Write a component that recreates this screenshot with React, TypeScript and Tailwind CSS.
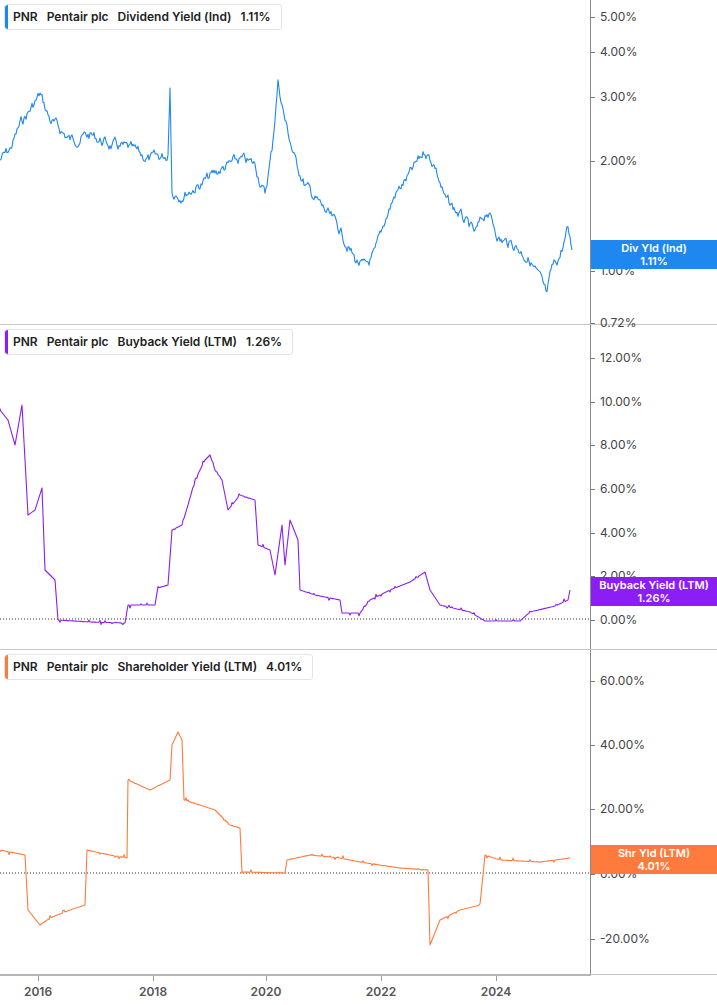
import React from "react";

type P = [number, number];

function rnd(seed: number) {
  let s = seed;
  return () => {
    s = (s * 9301 + 49297) % 233280;
    return s / 233280;
  };
}

function build(pts: P[], off: number, amp: number, seed: number, step = false) {
  const r = rnd(seed);
  const out: string[] = [];
  let drift = 0;
  for (let i = 0; i < pts.length - 1; i++) {
    const [x0, y0] = pts[i];
    const [x1, y1] = pts[i + 1];
    if (x1 - x0 <= 3) {
      out.push(`${x0},${y0 - off}`);
      continue;
    }
    for (let x = x0; x < x1; x += 1) {
      const t = (x - x0) / (x1 - x0);
      drift = drift * 0.7 + (r() - 0.5) * amp;
      const n = step ? (r() > 0.9 ? (r() - 0.5) * amp : 0) : drift;
      const y = y0 + (y1 - y0) * t + n;
      out.push(`${x},${(y - off).toFixed(1)}`);
    }
  }
  const l = pts[pts.length - 1];
  out.push(`${l[0]},${l[1] - off}`);
  return out.join(" ");
}

const s1: P[] = [[0,160],[10,150],[20,125],[30,110],[40,95],[50,120],[70,140],[90,135],[110,145],[130,150],[150,160],[168,155],[170,88],[172,190],[180,195],[200,185],[220,170],[240,160],[255,165],[265,195],[272,150],[278,82],[285,120],[295,160],[305,185],[320,205],[340,230],[355,260],[365,268],[375,255],[385,220],[395,195],[410,175],[425,150],[435,165],[445,200],[460,215],[475,235],[487,210],[500,240],[515,245],[530,260],[540,280],[547,297],[552,270],[560,255],[568,230],[572,250]];
const s2: P[] = [[0,410],[8,420],[15,445],[22,405],[28,515],[35,510],[42,488],[45,570],[55,580],[58,620],[90,622],[125,623],[128,605],[155,605],[158,588],[168,585],[172,530],[182,525],[188,505],[195,480],[205,460],[210,455],[215,470],[222,480],[228,510],[240,495],[255,500],[258,545],[270,550],[275,575],[282,525],[285,565],[290,520],[298,540],[300,590],[315,595],[340,600],[342,613],[360,613],[370,600],[390,590],[410,582],[425,572],[430,590],[440,605],[470,612],[485,621],[520,621],[530,612],[555,606],[568,600],[570,590]];
const s3: P[] = [[0,850],[25,855],[28,910],[40,925],[50,918],[70,910],[85,905],[87,850],[110,855],[127,858],[128,780],[150,790],[160,785],[170,780],[172,745],[178,732],[182,740],[184,800],[200,805],[215,810],[230,825],[240,828],[242,872],[285,873],[287,860],[310,855],[340,858],[360,862],[400,868],[428,870],[430,945],[440,920],[460,910],[480,905],[485,855],[500,860],[540,862],[570,858]];

const font = { fontFamily: "Inter, 'Liberation Sans', sans-serif" };

function Panel(props: {
  off: number; pts: P[]; color: string; amp: number; seed: number; step?: boolean;
  legend: string; value: string; labels: [string, number][]; zero?: number;
  badge: string; badgeVal: string; badgeY: number;
}) {
  const { off } = props;
  return (
    <div className="flex h-[325px] border-b border-[#c8c8c8]">
      <div className="relative w-[591px] border-r border-[#8a8a8a]">
        <svg className="absolute inset-0" width="591" height="325">
          {props.zero !== undefined && (
            <line x1="0" x2="591" y1={props.zero - off} y2={props.zero - off} stroke="#333" strokeDasharray="1 2" />
          )}
          <polyline points={build(props.pts, off, props.amp, props.seed, props.step)} fill="none" stroke={props.color} strokeWidth="1.1" strokeLinejoin="round" />
        </svg>
        <div className="absolute left-[4px] top-[4px] flex h-[26px] items-center gap-[9px] rounded-[3px] border border-[#e4e4e4] bg-white pl-[8px] pr-[10px] text-[12px] font-semibold text-[#222]">
          <div className="absolute left-0 top-0 h-full w-[3px] rounded-l-[3px]" style={{ background: props.color }} />
          <span>PNR</span><span>Pentair plc</span><span>{props.legend}</span><span>{props.value}</span>
        </div>
      </div>
      <div className="relative w-[126px]">
        {props.labels.map(([t, y]) => (
          <div key={t} className="absolute left-0 flex items-center" style={{ top: y - off - 8 }}>
            <div className="h-px w-[4px] bg-[#777]" />
            <span className="ml-[5px] text-[12px] text-[#444]">{t}</span>
          </div>
        ))}
        <div className="absolute left-0 right-0 flex h-[29px] flex-col items-center justify-center text-[11px] font-semibold leading-[13px] text-white" style={{ top: props.badgeY - off, background: props.color }}>
          <span>{props.badge}</span><span>{props.badgeVal}</span>
        </div>
      </div>
    </div>
  );
}

export default function App() {
  return (
    <div className="w-[717px] h-[1005px] bg-white" style={font}>
      <Panel off={0} pts={s1} color="#1e88f0" amp={9} seed={7} legend="Dividend Yield (Ind)" value="1.11%"
        labels={[["5.00%",16],["4.00%",51],["3.00%",96],["2.00%",160],["1.00%",270],["0.72%",322]]}
        badge="Div Yld (Ind)" badgeVal="1.11%" badgeY={240} />
      <Panel off={325} pts={s2} color="#8a1ef5" amp={6} seed={11} step legend="Buyback Yield (LTM)" value="1.26%" zero={619}
        labels={[["12.00%",357],["10.00%",401],["8.00%",444],["6.00%",488],["4.00%",532],["2.00%",575],["0.00%",619]]}
        badge="Buyback Yield (LTM)" badgeVal="1.26%" badgeY={577} />
      <Panel off={650} pts={s3} color="#ff7a3d" amp={6} seed={23} step legend="Shareholder Yield (LTM)" value="4.01%" zero={873}
        labels={[["60.00%",680],["40.00%",744],["20.00%",808],["0.00%",873],["-20.00%",938]]}
        badge="Shr Yld (LTM)" badgeVal="4.01%" badgeY={845} />
      <div className="relative h-[30px] w-[591px] border-t-[2px] border-[#b4b4b4] -mt-px">
        {[["2016",38],["2018",153],["2020",266],["2022",381],["2024",496]].map(([t, x]) => (
          <div key={t as string} className="absolute top-0 flex flex-col items-center" style={{ left: (x as number) - 20, width: 40 }}>
            <div className="h-[5px] w-px bg-[#999]" />
            <span className="mt-[2px] text-[12px] font-semibold text-[#555]">{t}</span>
          </div>
        ))}
      </div>
    </div>
  );
}
